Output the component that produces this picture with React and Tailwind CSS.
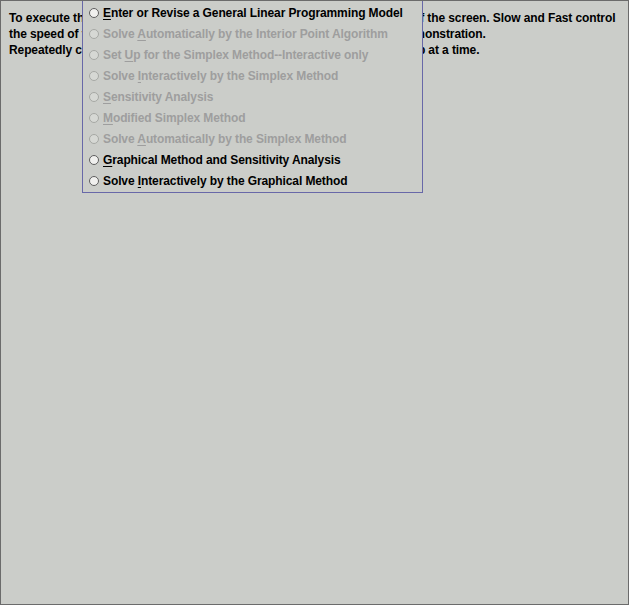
import React from 'react';

const items = [
  { pre: '', key: 'E', post: 'nter or Revise a General Linear Programming Model', enabled: true },
  { pre: 'Solve ', key: 'A', post: 'utomatically by the Interior Point Algorithm', enabled: false },
  { pre: 'Set ', key: 'U', post: 'p for the Simplex Method--Interactive only', enabled: false },
  { pre: 'Solve ', key: 'I', post: 'nteractively by the Simplex Method', enabled: false },
  { pre: '', key: 'S', post: 'ensitivity Analysis', enabled: false },
  { pre: '', key: 'M', post: 'odified Simplex Method', enabled: false },
  { pre: 'Solve ', key: 'A', post: 'utomatically by the Simplex Method', enabled: false },
  { pre: '', key: 'G', post: 'raphical Method and Sensitivity Analysis', enabled: true },
  { pre: 'Solve ', key: 'I', post: 'nteractively by the Graphical Method', enabled: true },
];

const Radio = ({ enabled }) => (
  <svg width="12" height="12" viewBox="0 0 12 12" className="shrink-0">
    <circle cx="6" cy="6" r="4.5" fill={enabled ? '#f0f0ee' : '#d6d8d4'} stroke={enabled ? '#5e5e5e' : '#a6a8a4'} strokeWidth="1" />
  </svg>
);

const lines = [
  'To execute the demonstration, click on the Start button near the bottom of the screen. Slow and Fast control',
  'the speed of the animation. Click Pause at any instant to interrupt the demonstration.',
  'Repeatedly clicking on Next Step will execute this demonstration one step at a time.',
];

export default function App() {
  return (
    <div className="relative w-[629px] h-[605px] bg-[#cbcdc9] border border-[#6b6b6b] overflow-hidden font-['Liberation_Sans',Arial,sans-serif] text-[12px] font-bold tracking-[-0.1px] text-black">
      {/* help text behind the menu */}
      <div className="pt-[9px] pl-[8px] leading-[16px]">
        {lines.map((l, i) => (
          <div key={i} className="whitespace-nowrap">{l}</div>
        ))}
      </div>

      {/* dropped-down menu */}
      <div className="absolute left-[81px] top-[-1px] w-[341px] h-[193px] bg-[#cbcdc9] border-x border-b border-[#6868a8] pt-[2px]">
        {items.map((it, i) => (
          <div
            key={i}
            className={`h-[21px] flex items-center gap-[3px] pl-[5px] whitespace-nowrap ${it.enabled ? 'text-black' : 'text-[#9e9e9e]'}`}
          >
            <Radio enabled={it.enabled} />
            <span>
              {it.pre}
              <span className="underline underline-offset-2">{it.key}</span>
              {it.post}
            </span>
          </div>
        ))}
      </div>
    </div>
  );
}
